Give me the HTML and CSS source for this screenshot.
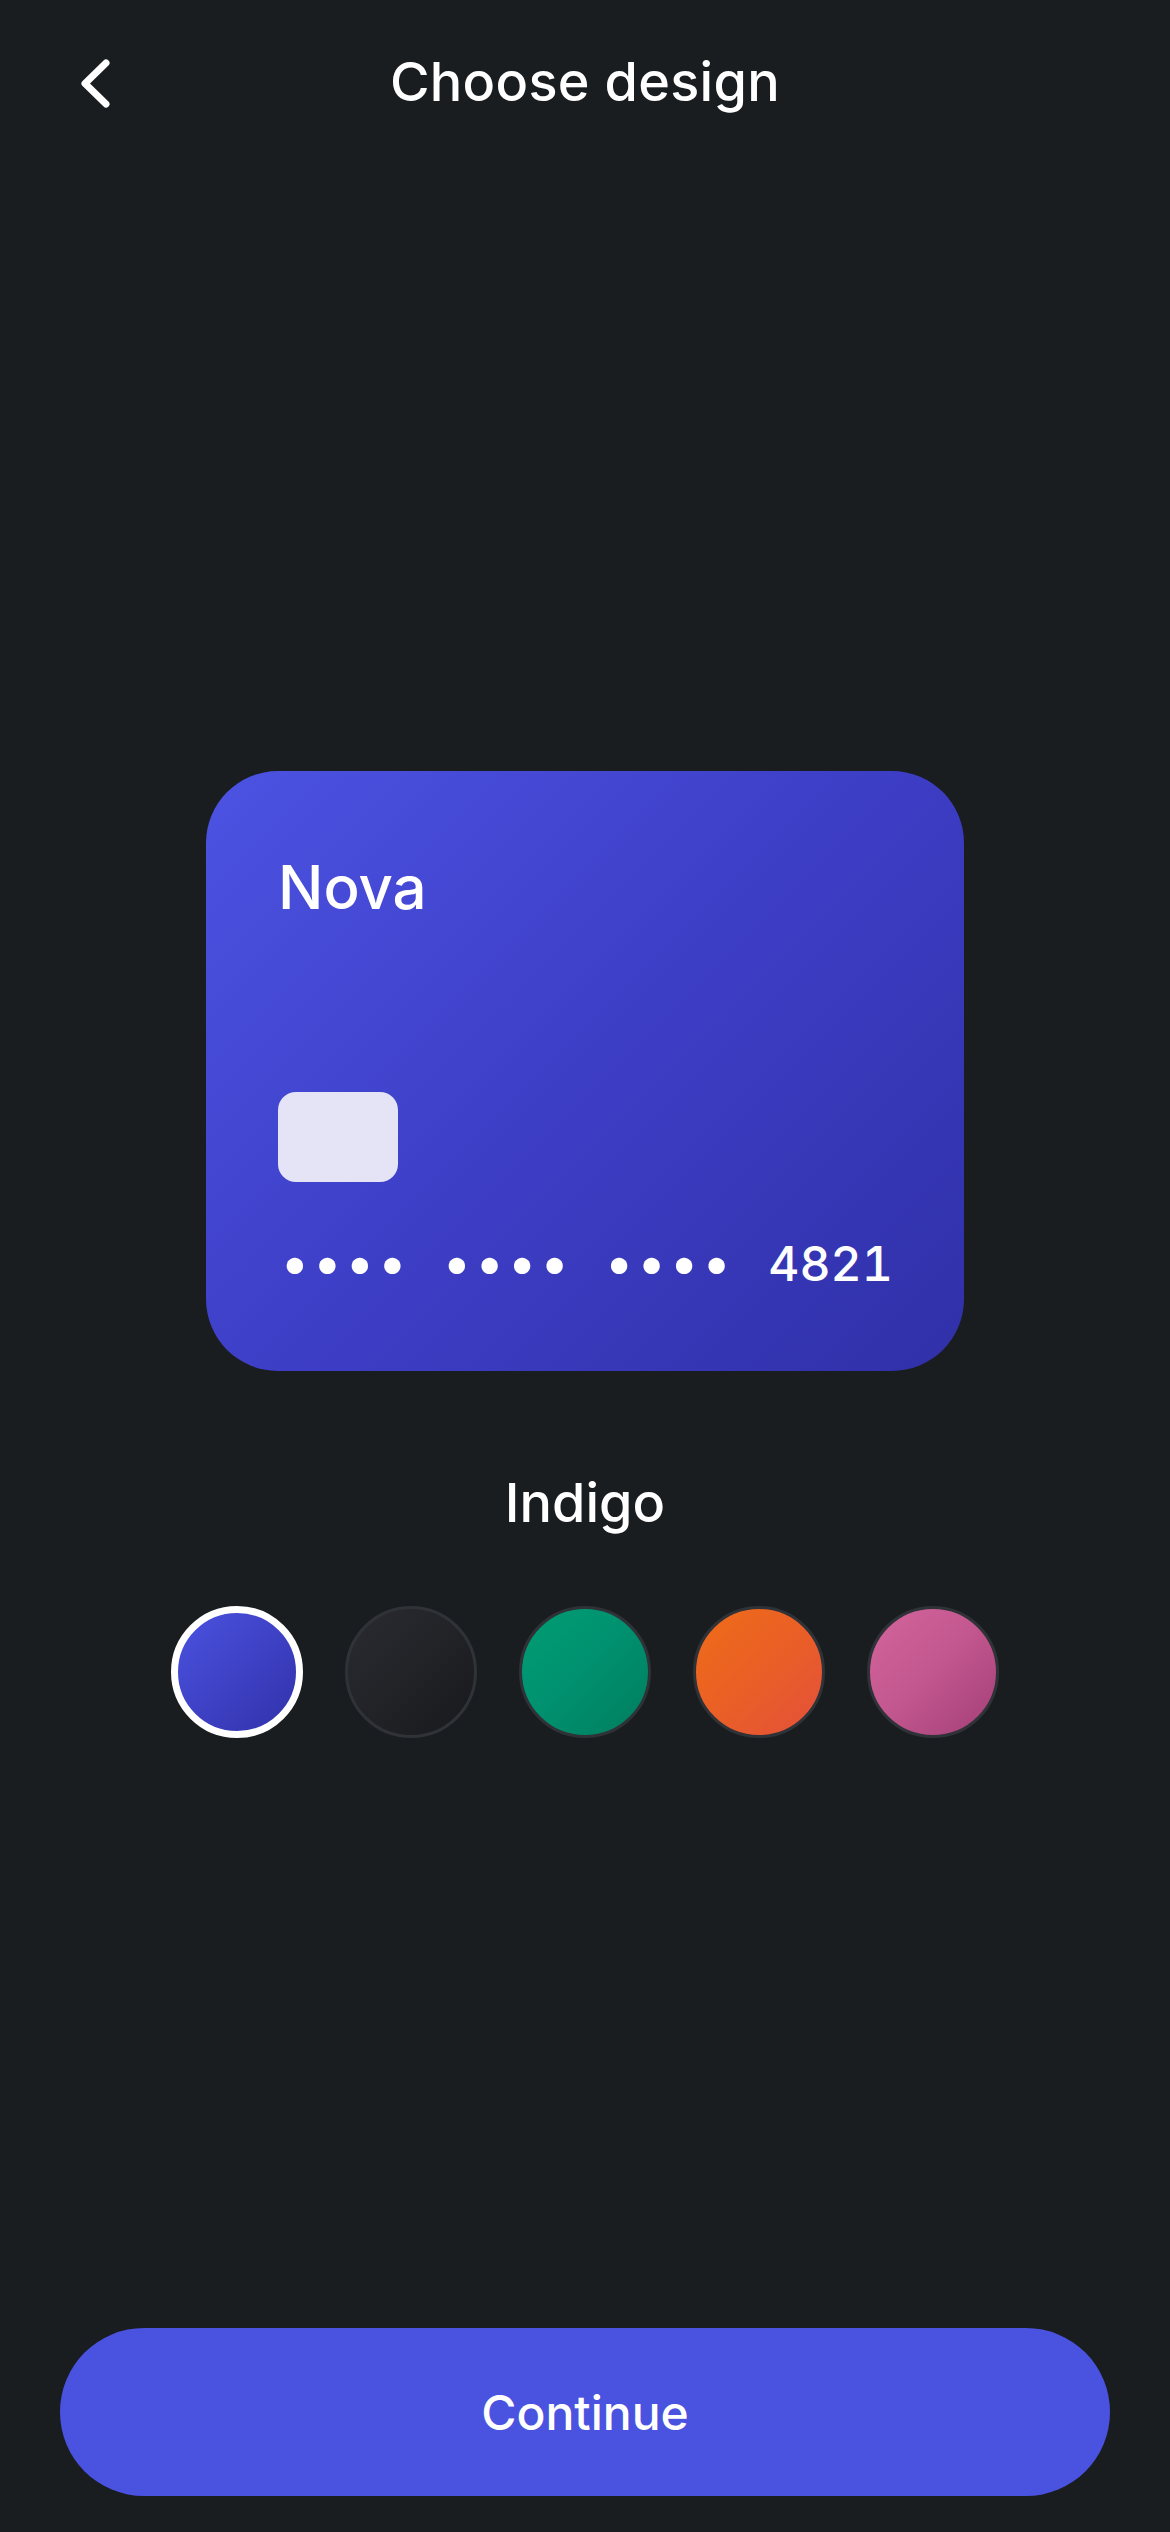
FILE: index.html
```html
<!DOCTYPE html>
<html lang="en">
<head>
<meta charset="utf-8">
<title>Choose design</title>
<link rel="stylesheet" href="styles.css">
</head>
<body>
<div class="page">
  <header class="topbar">
    <button class="back" aria-label="Back">
      <svg viewBox="0 0 40 60" width="40" height="60"><polyline points="30,9 9,29.5 30,50" fill="none" stroke="#fff" stroke-width="7" stroke-linecap="round" stroke-linejoin="round"/></svg>
    </button>
    <h1 class="title">Choose design</h1>
  </header>
  <main class="content">
    <div class="card">
      <div class="card-name">Nova</div>
      <div class="chip"></div>
      <div class="card-number">
        <span class="mask">••••</span>
        <span class="mask">••••</span>
        <span class="mask">••••</span>
        <span class="last4">4821</span>
      </div>
    </div>
    <div class="design-name">Indigo</div>
    <div class="swatches">
      <span class="swatch indigo selected"></span>
      <span class="swatch graphite"></span>
      <span class="swatch emerald"></span>
      <span class="swatch sunset"></span>
      <span class="swatch rose"></span>
    </div>
  </main>
  <footer class="footer">
    <button class="continue">Continue</button>
  </footer>
</div>
</body>
</html>
```
FILE: styles.css
```css
* { box-sizing: border-box; }
html, body { margin: 0; padding: 0; background: #1a1d20; }
body { font-family: Inter, "Noto Sans", "Liberation Sans", sans-serif; color: #fff; }

.page {
  min-height: 2532px;
  display: flex;
  flex-direction: column;
}

.topbar {
  height: 164px;
  display: flex;
  align-items: center;
  justify-content: center;
  position: relative;
}
.back {
  position: absolute;
  left: 76px;
  top: 54px;
  width: 40px;
  height: 60px;
  padding: 0;
  border: 0;
  background: none;
  display: flex;
}
.title {
  margin: 0;
  font-size: 54px;
  line-height: 64px;
  font-weight: 500;
  letter-spacing: 0.3px;
}

.content {
  display: flex;
  flex-direction: column;
  align-items: center;
  padding-top: 607px;
}

.card {
  width: 758px;
  height: 600px;
  border-radius: 72px;
  background: linear-gradient(135deg, #4c53e2 0%, #3d3ec6 50%, #3030a8 100%);
  padding: 80px 72px 0;
  display: flex;
  flex-direction: column;
}
.card-name {
  font-size: 60px;
  line-height: 72px;
  font-weight: 500;
}
.chip {
  margin-top: 169px;
  width: 120px;
  height: 90px;
  border-radius: 18px;
  background: #e4e4f6;
}
.card-number {
  margin-top: 52px;
  display: flex;
  align-items: baseline;
  gap: 32px;
  font-size: 48px;
  line-height: 58px;
  font-weight: 500;
  padding-left: 3px;
}
.mask {
  font-size: 52px;
  letter-spacing: 4.8px;
}
.last4 {
  margin-left: 1px;
  letter-spacing: 0;
  font-variant-numeric: tabular-nums;
}

.design-name {
  margin-top: 100px;
  font-size: 54px;
  line-height: 64px;
  font-weight: 500;
}

.swatches {
  margin-top: 71px;
  display: flex;
  gap: 42px;
}
.swatch {
  width: 132px;
  height: 132px;
  border-radius: 50%;
  border: 3px solid #2f3237;
}
.swatch.selected { border: 7px solid #ffffff; }
.indigo { background: linear-gradient(135deg, #4b52e0, #3131aa); }
.graphite { background: linear-gradient(135deg, #2a2b30 0%, #222327 50%, #17191c 100%); }
.emerald { background: linear-gradient(135deg, #009d73 0%, #009270 45%, #007d5e 100%); }
.sunset { background: linear-gradient(135deg, #ef6c18 0%, #ea5f26 50%, #e3503b 100%); }
.rose { background: linear-gradient(135deg, #d3659c 0%, #c2568e 50%, #a33f78 100%); }

.footer {
  margin-top: auto;
  padding: 0 60px 36px;
}
.continue {
  width: 100%;
  height: 168px;
  border: 0;
  border-radius: 84px;
  background: #4a52e0;
  color: #fff;
  font-family: Inter, "Noto Sans", "Liberation Sans", sans-serif;
  font-size: 48px;
  font-weight: 500;
}
```
